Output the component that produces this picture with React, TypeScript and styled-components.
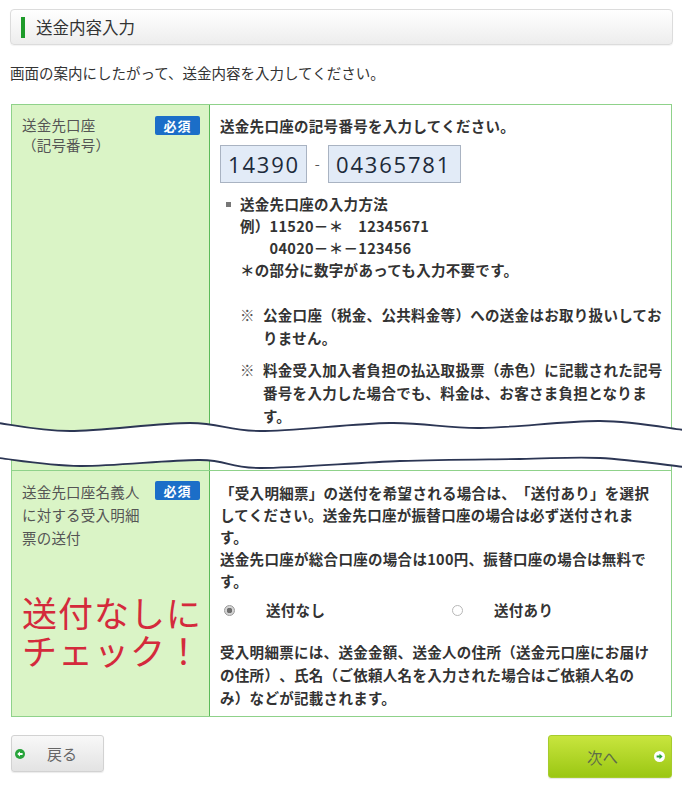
import React from 'react';
import styled, { createGlobalStyle } from 'styled-components';

const GlobalStyle = createGlobalStyle`
  html, body { margin: 0; padding: 0; background: #fff; }
  body {
    font-family: "Noto Sans CJK JP", "Noto Sans", sans-serif;
    color: #333;
    text-spacing-trim: space-all;
  }
`;

const Page = styled.div`
  position: relative;
  padding: 9px 9px 20px 10px;
`;

const TitleBar = styled.div`
  height: 36px;
  box-sizing: border-box;
  border: 1px solid #dcdcdc;
  border-radius: 4px;
  background: linear-gradient(#ffffff, #ededed);
  box-shadow: 0 1px 1px rgba(0, 0, 0, 0.05);
  display: flex;
  align-items: center;
  padding-left: 10px;
  gap: 11px;
`;

const Accent = styled.span`
  width: 4px;
  height: 21px;
  background: #1e9b2a;
`;

const Title = styled.h1`
  margin: 0;
  font-size: 16.5px;
  font-weight: 400;
  color: #333;
  line-height: 1;
`;

const Intro = styled.p`
  margin: 18px 0 21px;
  font-size: 14.5px;
  line-height: 20px;
  color: #333;
`;

const Table = styled.div`
  margin: 0 1px;
  border: 1px solid #8fd28a;
`;

const Row = styled.div`
  position: relative;
  display: grid;
  grid-template-columns: 198px 1fr;
  & + & {
    border-top: 1px solid #8fd28a;
  }
`;

const LabelCell = styled.div<{ $pt: number }>`
  background: #daf4c6;
  border-right: 1px solid #5cba5a;
  padding: ${(p) => p.$pt}px 9px 10px 10px;
`;

const LabelHead = styled.div`
  display: flex;
  justify-content: space-between;
  align-items: flex-start;
`;

const LabelText = styled.div<{ $lh: number }>`
  font-size: 14.5px;
  line-height: ${(p) => p.$lh}px;
  color: #555;
  letter-spacing: 0.2px;
`;

const Badge = styled.span`
  margin-top: 1px;
  width: 45px;
  height: 19px;
  display: flex;
  align-items: center;
  justify-content: center;
  background: #1b6ec8;
  border-radius: 2px;
  color: #fff;
  font-size: 13px;
  font-weight: 700;
  letter-spacing: 1px;
`;

const Callout = styled.div`
  margin-top: 44px;
  font-size: 35px;
  line-height: 38px;
  letter-spacing: 1px;
  color: #d42a3c;
  font-weight: 400;
  white-space: nowrap;
`;

const ContentCell = styled.div<{ $pt: number; $pb: number }>`
  padding: ${(p) => p.$pt}px 6px ${(p) => p.$pb}px 10px;
  font-size: 14.5px;
  letter-spacing: 0.3px;
  font-weight: 700;
  color: #333;
  line-height: 22px;
  white-space: nowrap;
`;

const Lead = styled.div``;

const InputRow = styled.div`
  margin-top: 8px;
  display: flex;
  align-items: center;
`;

const CodeBox = styled.input<{ $w: number }>`
  width: ${(p) => p.$w}px;
  height: 38px;
  box-sizing: border-box;
  border: 1px solid #a9b3c2;
  background: #e2ebf7;
  padding: 0 0 0 7px;
  margin: 0;
  font-family: "Open Sans", "DejaVu Sans", sans-serif;
  font-size: 22px;
  font-weight: 400;
  letter-spacing: 1.8px;
  color: #1c2a3a;
  outline: none;
`;

const Hyphen = styled.span`
  width: 21px;
  text-align: center;
  font-weight: 400;
  color: #555;
`;

const MethodList = styled.div`
  margin-top: 10px;
`;

const MethodLine = styled.div`
  display: flex;
  align-items: center;
`;

const BulletSlot = styled.span`
  width: 20px;
  display: flex;
  align-items: center;
`;

const Square = styled.span`
  margin-left: 6px;
  width: 5px;
  height: 5px;
  background: #777;
`;

const Indent = styled.div<{ $px: number }>`
  padding-left: ${(p) => p.$px}px;
`;

const NoteList = styled.div`
  margin-top: 22px;
  padding-left: 20px;
  display: flex;
  flex-direction: column;
  gap: 9px;
`;

const Note = styled.div`
  display: flex;
  line-height: 23px;
`;

const NoteMark = styled.span`
  width: 23px;
  flex: none;
  font-weight: 400;
  color: #555;
`;

const BreakWave = styled.svg`
  position: absolute;
  left: -12px;
  bottom: 0;
  width: 682px;
  height: 52px;
  overflow: visible;
  pointer-events: none;
`;

const RadioRow = styled.div`
  height: 36px;
  display: flex;
  align-items: center;
`;

const RadioOption = styled.label`
  width: 228px;
  display: flex;
  align-items: center;
  gap: 31px;
`;

const RadioDot = styled.span<{ $checked?: boolean }>`
  margin-left: 4px;
  width: 11px;
  height: 11px;
  box-sizing: border-box;
  border-radius: 50%;
  border: 1px solid ${(p) => (p.$checked ? '#9a9a9a' : '#b8b8b8')};
  background: ${(p) => (p.$checked ? 'radial-gradient(circle, #6e6e6e 0 2.6px, #d4d4d4 3px)' : '#fff')};
`;

const Tail = styled.div`
  margin-top: 12px;
  line-height: 23px;
`;

const ButtonRow = styled.div`
  margin: 18px 1px 0;
  display: flex;
  justify-content: space-between;
  align-items: flex-start;
`;

const BackButton = styled.button`
  width: 93px;
  height: 37px;
  box-sizing: border-box;
  border: 1px solid #d2d2d2;
  border-radius: 3px;
  background: linear-gradient(#f8f8f8, #e3e3e3);
  box-shadow: 0 1px 1px rgba(0, 0, 0, 0.08);
  display: flex;
  align-items: center;
  gap: 22px;
  padding: 0 0 0 3px;
  font-family: "Noto Sans CJK JP", sans-serif;
  font-size: 15px;
  color: #666;
  cursor: pointer;
`;

const NextButton = styled.button`
  width: 124px;
  height: 43px;
  box-sizing: border-box;
  border: 1px solid #a6cc2c;
  border-radius: 3px;
  background: linear-gradient(#c8e53e, #9bc713);
  box-shadow: 0 1px 1px rgba(0, 0, 0, 0.1);
  display: flex;
  align-items: center;
  padding: 0 6px 0 38px;
  font-family: "Noto Sans CJK JP", sans-serif;
  font-size: 15.5px;
  color: #5e6d48;
  cursor: pointer;
`;

const NextIcon = styled.svg`
  margin-left: auto;
`;

type Pt = [number, number];

function smooth(pts: Pt[]): string {
  let d = '';
  for (let i = 0; i < pts.length - 1; i++) {
    const p0 = pts[i - 1] || pts[i];
    const p1 = pts[i];
    const p2 = pts[i + 1];
    const p3 = pts[i + 2] || p2;
    const c1 = [p1[0] + (p2[0] - p0[0]) / 6, p1[1] + (p2[1] - p0[1]) / 6];
    const c2 = [p2[0] - (p3[0] - p1[0]) / 6, p2[1] - (p3[1] - p1[1]) / 6];
    d += ` C ${c1[0]} ${c1[1]} ${c2[0]} ${c2[1]} ${p2[0]} ${p2[1]}`;
  }
  return d;
}

const topWave: Pt[] = [[-2, 5], [70, 13], [190, 5], [260, 13], [390, 5], [480, 10], [600, 3], [684, 12]];
const bottomWave: Pt[] = [[-2, 40], [80, 48], [200, 42], [260, 50], [400, 43], [520, 41], [600, 40], [684, 49]];

function WaveBreak() {
  const rev = [...bottomWave].reverse();
  const fill = `M ${topWave[0][0]} ${topWave[0][1]}${smooth(topWave)} L ${rev[0][0]} ${rev[0][1]}${smooth(rev)} Z`;
  return (
    <BreakWave viewBox="0 0 682 52">
      <path d={fill} fill="#fff" />
      <path d={`M ${topWave[0][0]} ${topWave[0][1]}${smooth(topWave)}`} fill="none" stroke="#2c3654" strokeWidth="1.8" />
      <path d={`M ${bottomWave[0][0]} ${bottomWave[0][1]}${smooth(bottomWave)}`} fill="none" stroke="#2c3654" strokeWidth="1.8" />
    </BreakWave>
  );
}

export default function App() {
  return (
    <>
      <GlobalStyle />
      <Page>
        <TitleBar>
          <Accent />
          <Title>送金内容入力</Title>
        </TitleBar>
        <Intro>画面の案内にしたがって、送金内容を入力してください。</Intro>

        <Table>
          <Row>
            <LabelCell $pt={10}>
              <LabelHead>
                <LabelText $lh={20}>
                  送金先口座
                  <br />
                  （記号番号）
                </LabelText>
                <Badge>必須</Badge>
              </LabelHead>
            </LabelCell>
            <ContentCell $pt={10} $pb={43}>
              <Lead>送金先口座の記号番号を入力してください。</Lead>
              <InputRow>
                <CodeBox $w={87} readOnly defaultValue="14390" />
                <Hyphen>-</Hyphen>
                <CodeBox $w={133} readOnly defaultValue="04365781" />
              </InputRow>
              <MethodList>
                <MethodLine>
                  <BulletSlot>
                    <Square />
                  </BulletSlot>
                  送金先口座の入力方法
                </MethodLine>
                <Indent $px={20}>例）11520－＊　12345671</Indent>
                <Indent $px={20}>　　04020－＊－123456</Indent>
                <Indent $px={20}>＊の部分に数字があっても入力不要です。</Indent>
              </MethodList>
              <NoteList>
                <Note>
                  <NoteMark>※</NoteMark>
                  <span>
                    公金口座（税金、公共料金等）への送金はお取り扱いしてお
                    <br />
                    りません。
                  </span>
                </Note>
                <Note>
                  <NoteMark>※</NoteMark>
                  <span>
                    料金受入加入者負担の払込取扱票（赤色）に記載された記号
                    <br />
                    番号を入力した場合でも、料金は、お客さま負担となりま
                    <br />
                    す。
                  </span>
                </Note>
              </NoteList>
            </ContentCell>
            <WaveBreak />
          </Row>

          <Row>
            <LabelCell $pt={9}>
              <LabelHead>
                <LabelText $lh={23}>
                  送金先口座名義人
                  <br />
                  に対する受入明細
                  <br />
                  票の送付
                </LabelText>
                <Badge>必須</Badge>
              </LabelHead>
              <Callout>
                送付なしに
                <br />
                チェック！
              </Callout>
            </LabelCell>
            <ContentCell $pt={11} $pb={7}>
              <div>
                「受入明細票」の送付を希望される場合は、「送付あり」を選択
                <br />
                してください。送金先口座が振替口座の場合は必ず送付されま
                <br />
                す。
                <br />
                送金先口座が総合口座の場合は100円、振替口座の場合は無料で
                <br />
                す。
              </div>
              <RadioRow>
                <RadioOption>
                  <RadioDot $checked />
                  送付なし
                </RadioOption>
                <RadioOption>
                  <RadioDot />
                  送付あり
                </RadioOption>
              </RadioRow>
              <Tail>
                受入明細票には、送金金額、送金人の住所（送金元口座にお届け
                <br />
                の住所）、氏名（ご依頼人名を入力された場合はご依頼人名の
                <br />
                み）などが記載されます。
              </Tail>
            </ContentCell>
          </Row>
        </Table>

        <ButtonRow>
          <BackButton type="button">
            <svg width="10" height="10" viewBox="0 0 10 10">
              <circle cx="5" cy="5" r="5" fill="#27a33a" />
              <path d="M2.2 5 L5 2.6 L5 4.1 L7.6 4.1 L7.6 5.9 L5 5.9 L5 7.4 Z" fill="#fff" />
            </svg>
            戻る
          </BackButton>
          <NextButton type="button">
            次へ
            <NextIcon width="11" height="11" viewBox="0 0 10 10">
              <circle cx="5" cy="5" r="5" fill="#fff" />
              <path d="M7.8 5 L5 2.6 L5 4.1 L2.4 4.1 L2.4 5.9 L5 5.9 L5 7.4 Z" fill="#27a33a" />
            </NextIcon>
          </NextButton>
        </ButtonRow>
      </Page>
    </>
  );
}
